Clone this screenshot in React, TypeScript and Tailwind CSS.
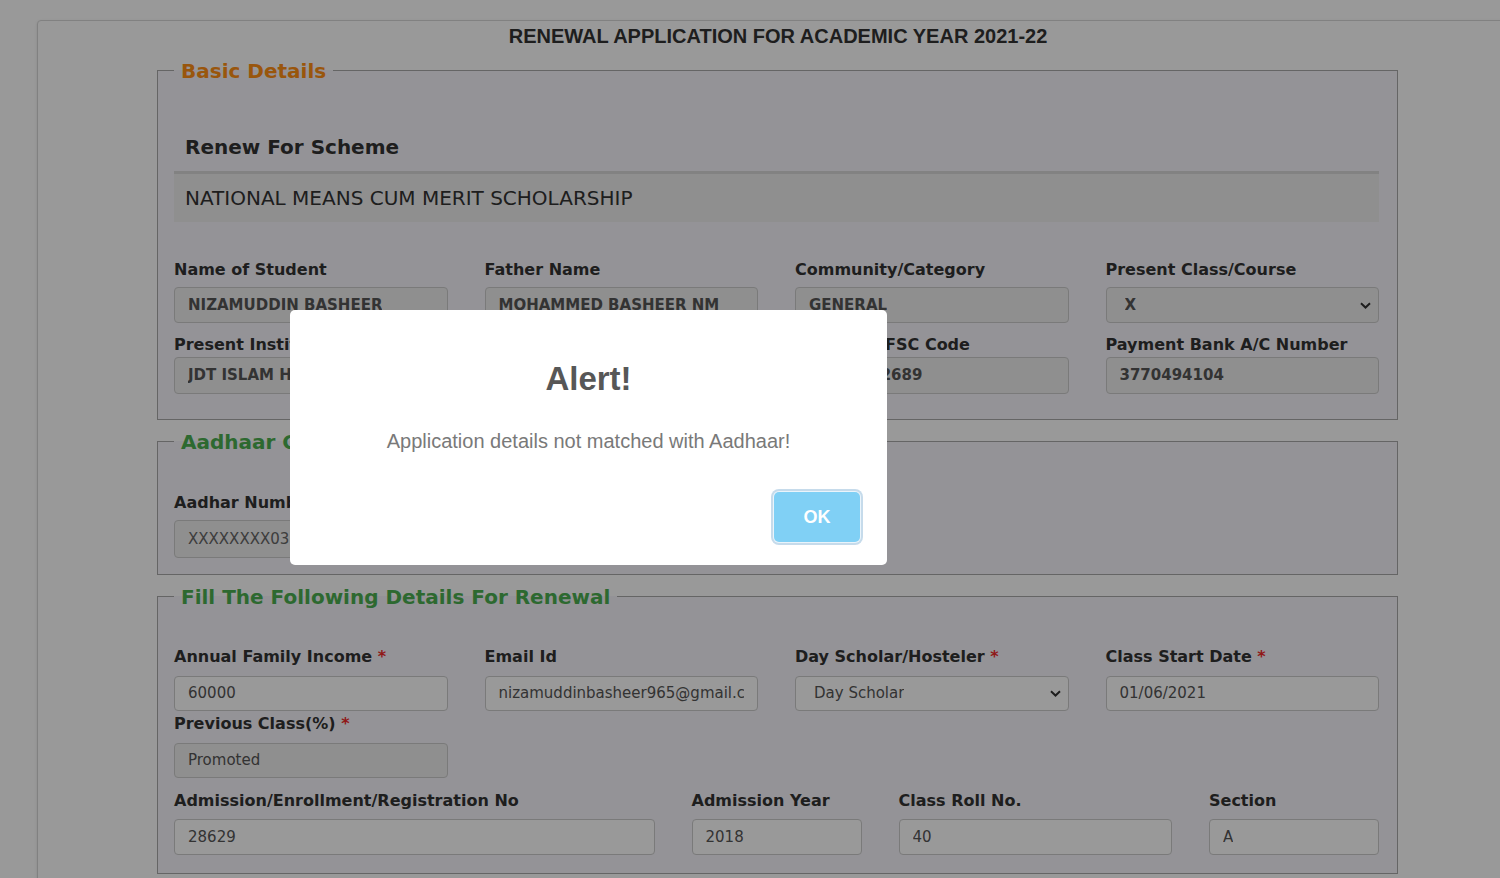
import React from "react";

const SANS = "font-['DejaVu_Sans','Verdana',sans-serif]";
const LABEL = `${SANS} block text-[16px] font-bold leading-[24px] text-[#333] whitespace-nowrap`;
const BOX =
  "flex w-full items-center rounded-[4px] border border-[#cccccc] pl-[13px] text-[15px] text-[#555] overflow-hidden whitespace-nowrap";

type FieldProps = {
  label: string;
  value: string;
  required?: boolean;
  disabled?: boolean;
  bold?: boolean;
  select?: boolean;
  labelClass?: string;
  boxClass?: string;
  className?: string;
};

function Chevron() {
  return (
    <svg width="11" height="7" viewBox="0 0 11 7" className="ml-auto mr-[1px] shrink-0">
      <path d="M1 1.2 L5.5 5.5 L10 1.2" fill="none" stroke="#333" strokeWidth="2" />
    </svg>
  );
}

function Field({
  label,
  value,
  required,
  disabled,
  bold,
  select,
  labelClass = "",
  boxClass = "",
  className = "",
}: FieldProps) {
  return (
    <div className={className}>
      <label className={`${LABEL} ${labelClass}`}>
        {label}
        {required && <span className="text-[#f02a2a]"> *</span>}
      </label>
      <div
        className={`${BOX} ${SANS} ${disabled ? "bg-[#eeeeee]" : "bg-white"} ${
          bold ? "font-bold" : "font-normal"
        } ${select ? "pl-[18px] pr-[6px]" : "pr-[13px]"} ${boxClass}`}
      >
        <span className="overflow-hidden">{value}</span>
        {select && <Chevron />}
      </div>
    </div>
  );
}

function Section({
  title,
  color,
  className = "",
  children,
}: {
  title: string;
  color: string;
  className?: string;
  children: React.ReactNode;
}) {
  return (
    <fieldset className={`w-[1241px] border border-[#a9a9a9] bg-[#f7f6fc] pl-[16px] pr-[18px] ${className}`}>
      <legend className={`${SANS} px-[7px] pt-[2px] text-[20px] font-bold leading-[28px] ${color}`}>
        {title}
      </legend>
      {children}
    </fieldset>
  );
}

export default function App() {
  return (
    <div className="relative h-[878px] w-[1500px] overflow-hidden bg-white">
      <div className="ml-[37px] mt-[20px] w-[1482px] rounded-[4px] border border-[#d8d8d8] bg-white pb-[40px] shadow-sm">
        <h1 className="pt-[3px] text-center font-['Liberation_Sans',Arial,sans-serif] text-[20px] font-bold leading-[24px] text-[#333]">
          RENEWAL APPLICATION FOR ACADEMIC YEAR 2021-22
        </h1>

        <div className="px-[119px]">
          {/* basic details */}
          <Section title="Basic Details" color="text-[#ff8f14]" className="mt-[7px] pb-[25px]">
            <div className={`${SANS} mt-[48px] text-[20px] font-bold leading-[28px] text-[#333] pl-[11px]`}>
              Renew For Scheme
            </div>
            <div
              className={`${SANS} mt-[10px] flex h-[51px] items-center border-t-[3px] border-[#d9d9d9] bg-[#eeeeee] pl-[11px] text-[20px] text-[#333]`}
            >
              NATIONAL MEANS CUM MERIT SCHOLARSHIP
            </div>

            <div className="mt-[36px] grid grid-cols-4 gap-x-[37px]">
              <Field label="Name of Student" value="NIZAMUDDIN BASHEER" disabled bold boxClass="mt-[5px] h-[36px]" />
              <Field label="Father Name" value="MOHAMMED BASHEER NM" disabled bold boxClass="mt-[5px] h-[36px]" />
              <Field label="Community/Category" value="GENERAL" disabled bold boxClass="mt-[5px] h-[36px]" />
              <Field label="Present Class/Course" value="X" disabled bold select boxClass="mt-[5px] h-[36px]" />
            </div>
            <div className="mt-[10px] grid grid-cols-4 gap-x-[37px]">
              <Field
                label="Present Institution"
                value="JDT ISLAM HSS"
                disabled
                bold
                labelClass="leading-[22px]"
                boxClass="h-[37px]"
              />
              <Field
                label="Payment Bank Name"
                value="STATE BANK OF INDIA"
                disabled
                bold
                labelClass="leading-[22px]"
                boxClass="h-[37px]"
              />
              <Field
                label="Payment IFSC Code"
                value="SBIN0012689"
                disabled
                bold
                labelClass="leading-[22px]"
                boxClass="h-[37px]"
              />
              <Field
                label="Payment Bank A/C Number"
                value="3770494104"
                disabled
                bold
                labelClass="leading-[22px]"
                boxClass="h-[37px]"
              />
            </div>
          </Section>

          {/* aadhaar */}
          <Section title="Aadhaar Consent" color="text-[#4caf50]" className="mt-[6px] pb-[16px]">
            <div className="mt-[35px] grid grid-cols-4 gap-x-[37px]">
              <Field label="Aadhar Number" value="XXXXXXXX0312" disabled boxClass="mt-[5px] h-[38px] text-[#666]" />
            </div>
          </Section>

          {/* renewal details */}
          <Section
            title="Fill The Following Details For Renewal"
            color="text-[#4caf50]"
            className="mt-[6px] pb-[18px]"
          >
            <div className="mt-[34px] grid grid-cols-4 gap-x-[37px]">
              <Field label="Annual Family Income" value="60000" required boxClass="mt-[7px] h-[35px]" />
              <Field label="Email Id" value="nizamuddinbasheer965@gmail.com" boxClass="mt-[7px] h-[35px]" />
              <Field
                label="Day Scholar/Hosteler"
                value="Day Scholar"
                required
                select
                boxClass="mt-[7px] h-[35px] bg-[#f9f9f9]"
              />
              <Field label="Class Start Date" value="01/06/2021" required boxClass="mt-[7px] h-[35px]" />
            </div>
            <div className="mt-[1px] grid grid-cols-4 gap-x-[37px]">
              <Field label="Previous Class(%)" value="Promoted" required disabled boxClass="mt-[7px] h-[35px]" />
            </div>
            <div className="mt-[11px] grid grid-cols-12 gap-x-[37px]">
              <Field
                className="col-span-5"
                label="Admission/Enrollment/Registration No"
                value="28629"
                boxClass="mt-[6px] h-[36px]"
              />
              <Field className="col-span-2" label="Admission Year" value="2018" boxClass="mt-[6px] h-[36px]" />
              <Field className="col-span-3" label="Class Roll No." value="40" boxClass="mt-[6px] h-[36px]" />
              <Field className="col-span-2" label="Section" value="A" boxClass="mt-[6px] h-[36px]" />
            </div>
          </Section>
        </div>
      </div>

      {/* dimmed backdrop + alert */}
      <div className="absolute inset-0 bg-black/40" />
      <div className="absolute left-[290px] top-[310px] flex h-[255px] w-[597px] flex-col rounded-[5px] bg-white font-['Liberation_Sans',Arial,sans-serif]">
        <h2 className="mt-[49px] text-center text-[33px] font-bold leading-[40px] text-[#575757]">Alert!</h2>
        <p className="mt-[30px] text-center text-[20px] leading-[24px] text-[#797979]">
          Application details not matched with Aadhaar!
        </p>
        <div className="mt-auto mb-[23px] mr-[27px] flex justify-end">
          <button
            type="button"
            className="h-[50px] w-[86px] rounded-[5px] bg-[#80d0f5] text-[18px] font-bold text-white shadow-[0_0_0_1px_#eaf4fb,0_0_0_3px_#c6dbeb]"
          >
            OK
          </button>
        </div>
      </div>
    </div>
  );
}
